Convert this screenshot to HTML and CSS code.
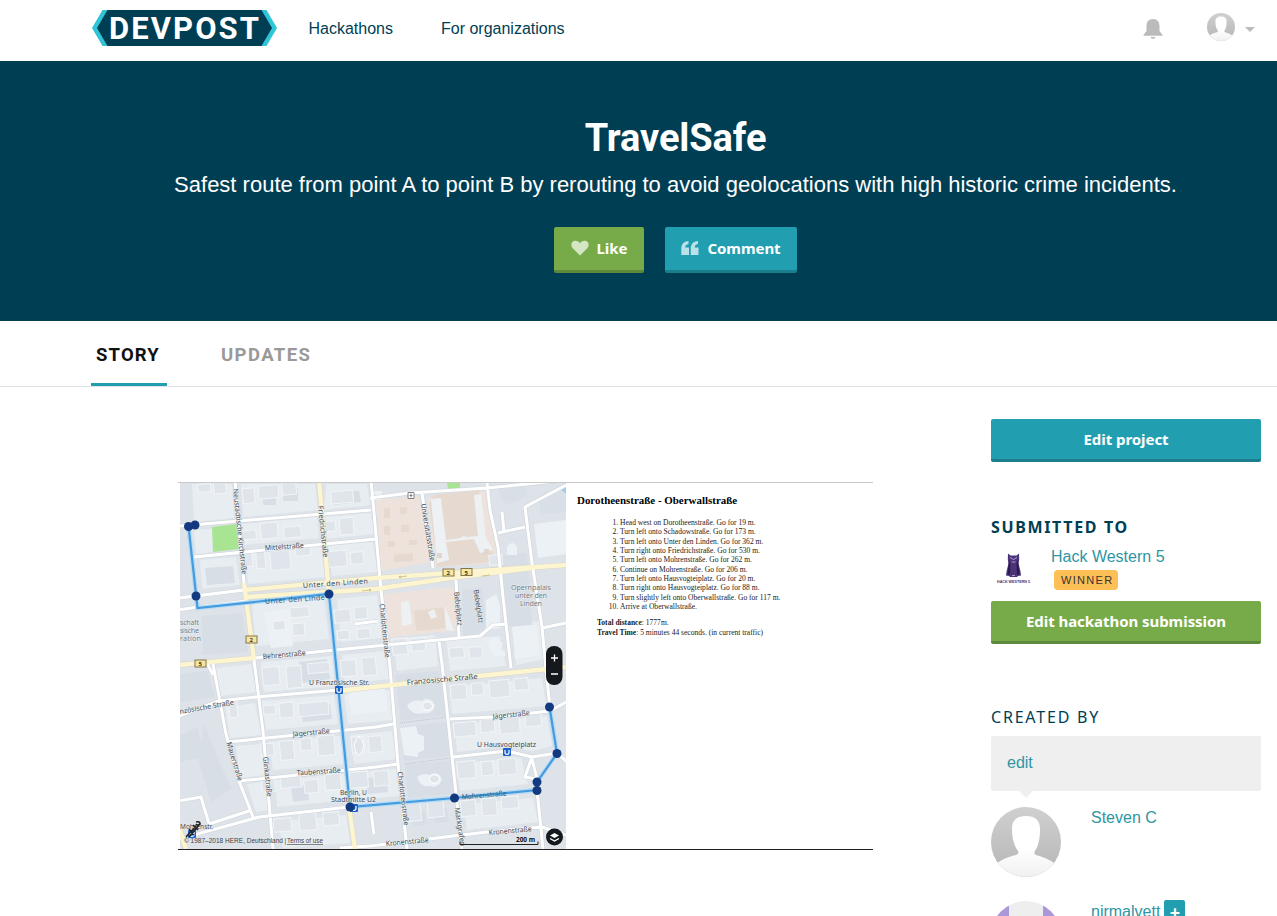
FILE: index.html
```html
<!DOCTYPE html>
<html lang="en">
<head>
<meta charset="utf-8">
<title>TravelSafe | Devpost</title>
<link rel="stylesheet" href="styles.css">
</head>
<body>
<svg class="defs" width="0" height="0">
  <defs>
    <linearGradient id="avatar-bg" x2="0" y2="1"><stop stop-color="#d0d0d0"/><stop offset="1" stop-color="#b5b5b5"/></linearGradient>
    <linearGradient id="avatar-fg" x2="0" y2="1"><stop offset=".5" stop-color="#fff"/><stop offset="1" stop-color="#ededed"/></linearGradient>
    <clipPath id="avatar-clip"><circle cx="35" cy="35" r="35"/></clipPath>
    <symbol id="avatar" viewBox="0 0 70 70">
      <g clip-path="url(#avatar-clip)">
        <path fill="url(#avatar-bg)" d="M0 0h70v70H0z"/>
        <path fill="url(#avatar-fg)" d="M35 9C26 9 21 13 21 22c0 9 2 17 6 22 1 2 0 3-2 4C16 50 10 53 5 57v18h60V57c-6-4-12-7-20-9-2-1-2-2-1-4 4-6 5-14 5-22 0-9-5-13-14-13z"/>
      </g>
    </symbol>
  </defs>
</svg>

<header class="topbar">
  <a class="logo">
    <svg width="186" height="36" viewBox="0 0 186 36">
      <path fill="#2fc5d6" d="M10.500 0h164l10.500 18-10.500 18h-164L0 18z"/>
      <path fill="#003e54" d="M15.500 0h154L180 18l-10.500 18h-154L5 18z"/>
      <text class="logo-text" x="17" y="29" textLength="150">DEVPOST</text>
    </svg>
  </a>
  <nav class="nav"><a>Hackathons</a><a>For organizations</a></nav>
  <div class="account">
    <svg class="bell" width="20" height="22" viewBox="0 0 20 22"><path fill="#bbb" d="M10 1C5.500 1 3.500 4 3.500 8v5L.5 17v.7h19V17l-3-4V8c0-4-2-7-6.500-7zM7.500 19h5c-.3 1.200-1 1.800-2.500 1.800S7.800 20.200 7.500 19z"/></svg>
    <svg class="me" width="28" height="28"><use href="#avatar"/></svg>
    <svg class="caret" width="10" height="6" viewBox="0 0 10 6"><path fill="#bbb" d="M0 0h10L5 5z"/></svg>
  </div>
</header>

<section class="hero">
  <h1>TravelSafe</h1>
  <p>Safest route from point A to point B by rerouting to avoid geolocations with high historic crime incidents.</p>
  <div class="hero-actions">
    <a class="btn green like">
      <svg width="18" height="16" viewBox="0 0 18 16"><path fill="#d5e6c5" d="M9 15.500 1.500 8C-.5 5.500.2 2 3 1c2.500-.8 4.800.3 6 2.300C10.200 1.300 12.500.2 15 1c2.800 1 3.500 4.500 1.500 7z"/></svg>
      <span>Like</span>
    </a>
    <a class="btn teal comment">
      <svg width="18" height="15" viewBox="0 0 18 15"><path id="q" fill="#b8e2e8" d="M7.500 0v3C5.500 3.300 4.300 4.500 4.200 6.500H8V14H.3V7.500C.3 3 3 .3 7.500 0z"/><use href="#q" x="9.500"/></svg>
      <span>Comment</span>
    </a>
  </div>
</section>

<nav class="tabs"><a class="tab active">STORY</a><a class="tab">UPDATES</a></nav>

<main class="content">
  <div class="gallery">
    <div class="slide">
      <svg class="map" width="388" height="366" viewBox="178 483 388 366">
        <defs>
          <clipPath id="frame"><path d="M180 483h386v366H180z"/></clipPath>
          <g id="dot"><circle r="4.500" fill="#133a80"/></g>
          <g id="ubahn"><rect x="-4" y="-4" width="8" height="8" rx="1" fill="#1b62cc"/><path d="M-2-2v2.500q0 1.800 2 1.800t2-1.800V-2" fill="none" stroke="#fff" stroke-width="1.200"/></g>
          <path id="white-roads" d="M179 526 371 510M370 498 410 493 487 488 566 480M194 557 376 539M179 598 244 590M179 610 198 607 246 601M235 480 244 583M254 660 263 731 273 849M254 658 376 646 480 636 493 625 507 624M371 480 381 590 390 667 398 764 407 849M422 493 433 568M487 483 490 510 498 547 503 597 511 668M566 485 525 507 532 563 542 627 547 680 550 707 557 753M498 533 525 527M542 628 566 623M456 580 459 637M439 642 442 664 462 849M339 690 256 697 219 701 179 716M213 664 226 734 239 781 253 817M228 742 376 727 393 724M239 781 376 767 398 764M450 719 493 717 550 711 566 702M453 757 507 751 532 757 557 753 567 762M532 757 525 777 537 779 532 759M179 839 259 817 349 807 454 798 537 790M209 824 249 811M209 824 201 797 179 801M340 848 370 846 487 832 542 827 566 835M537 790 543 849M188 526 198 608M371 812 374 834M355 624 378 621M206 661 213 675M502 512 504 531"/>
          <path id="yellow-roads" d="M244 590 376 578 566 565M246 597 376 589 450 578 532 568M244 583 254 660M179 665 254 658M319 480 329 593M339 691 373 687 547 669 566 667M349 807 355 849M180 830 186 849"/>
        </defs>
        <g clip-path="url(#frame)">
          <path fill="#dde3e9" d="M178 482h390v370H178z"/>
          <!-- city blocks -->
          <g fill="#e8edf1">
            <path d="M192 484h40l2 34-40 4zM241 484h74l3 26-75 7zM326 484h41l3 21-46 5zM194 530l18-1 2 23-18 2zM242 524l75-7 2 21-75 7zM325 517l46-4 3 21-48 5zM200 560l36-3 4 28-38 4zM246 553l75-7 4 31-77 7zM328 546l45-4 4 30-45 4zM252 604l72-6 5 41-73 7zM337 599l40-4 5 43-41 4zM216 668l35-4 5 28-35 4zM261 662l71-6 3 30-71 6zM342 655l43-4 4 28-44 5zM225 707l30-4 6 32-31 3zM262 701l72-6 4 29-72 6zM344 695l46-5 4 30-46 4zM236 746l26-2 4 31-26 3zM269 742l71-6 4 28-71 6zM350 735l42-4 4 28-42 5zM247 784l20-2 3 28-14 2zM275 780l69-6 3 26-70 7zM354 773l42-4 4 27-43 4zM278 821l68-6 4 28-67 5zM450 687l92-9 4 28-94 8zM454 724l93-8 5 30-20 5-25-5-50 6zM457 763l64-5 7 26-68 7zM463 804l70-6 5 24-71 8zM393 639l42-4 3 31-41 5zM446 640l54-4 6 30-56 5zM513 623l26-2 5 38-28 6z"/>
          </g>
          <g fill="#d8dee5">
            <path d="M205 568l28-2 2 17-28 2zM263 496h13v9h-13zM283 488h15v13h-15zM332 491h27l2 11-27 3zM202 616l40-3 6 39-45 3zM180 674l27-3 8 26-35 5zM301 707l29-3 2 15-29 3zM299 662l28-3 3 20-28 4zM180 735l18-8 5 30-23 5zM204 724l18 44 10 20-21 14-13-43zM291 787l16-2 2 15-16 2zM366 778l20-2 2 16-20 2zM395 675l44-4 8 44-46 6zM400 727l47-5 4 34-47 5zM405 765l48-5 3 34-48 4zM412 812l13-1 1 14-13 1zM433 809l14-1 1 14-13 1zM498 555l29-2 5 72-28 2zM462 590l20-2 5 46-24 1z"/>
          </g>
          <!-- university and opera quarters -->
          <path fill="#ede3dc" d="m376 500 43-4 13 66-51 9zM427 498l58-7 14 72-64 4zM384 594l69-7 4 43-71 8z"/>
          <path fill="#e6d9cf" d="m434 495 45-5 8 54 12 17-62 6-2-18-6-45zM414 611l31-4 2 21-31 3zM384 508h6v10h-6zM400 507h7v7h-7zM384 526h6v9h-6zM401 525h8v7h-8zM388 541h7v6h-7zM409 540h8v5h-8zM394 555l19-2v8l-19 1z"/>
          <path fill="#eef1f4" d="m431 499 10-1 5 42 14-2 3-2 4 1 11-1-4-41 7-1 5 43 7 13-13 3-6-14-28 3 3 18-12 3zM401 602l8-1 3 23-10 2zM428 612l6-3 3 8-6 2zM444 605l5 12 5 14-8-1z"/>
          <path fill="#e0d6ce" d="M437 553h5v5h-5zM484 549h5v5h-5z"/>
          <g fill="#ecf1f5">
            <path d="m534 524 32-4v34l-28 4zM264 612l26-3 3 37-22 2zM512 627l24-2 4 30-25 4zM347 692l38-4 3 23-36 4zM507 547q5-8 10 0v8h-10zM486 600l10-6 4 11v23l-14 2zM487 641l8-4 8 6-3 8h5v5h-12zM407 706q5-7 15-5 7-6 13 4-2 10-12 8-10 3-16-7zM400 728l16-2 2 8 6 2v14l-6 3v4l-14-2zM417 777q6-5 13-2 9-5 12 5-4 9-13 6-8 2-12-9zM373 491h9v9h-9z"/>
          </g>
          <path fill="#d9dfe6" d="m497 487 27-3 4 10-12 8-12 2zM548 498l14-7 4 6v15l-15 2zM539 496l8-5 3 22-9 1z"/>
          <path fill="#a9e493" d="M447 483h13v6h-12z"/>
          <path fill="#9dccec" d="m558 487 8-4v11z"/>
          <!-- building outlines and courtyards, aligned to the street grid -->
          <g class="buildings" transform="rotate(-5 373 666)">
            <path d="M214 470h13v8h-13zM230 469h12v12h-12zM258 478h12v15h-12zM274 477h20v13h-20zM298 470h14v18h-14zM346 489h22v12h-22zM251 520h17v9h-17zM273 514h17v16h-17zM296 520h17v11h-17zM250 542h12v14h-12zM266 542h9v17h-9zM280 543h20v19h-20zM306 541h15v9h-15zM336 518h12v10h-12zM352 516h14v17h-14zM338 548h18v16h-18zM360 551h13v12h-13z"/>
            <path d="M277 613h12v9h-12zM295 601h19v10h-19zM296 617h12v12h-12zM339 607h16v13h-16zM359 606h13v12h-13zM340 628h12v9h-12zM360 628h13v10h-13zM262 658h17v18h-17zM286 659h15v22h-15zM308 658h22v10h-22zM341 658h15v16h-15zM362 657h14v18h-14zM226 687h8v18h-8zM260 696h12v9h-12zM276 695h14v15h-14zM295 697h30v13h-30z"/>
            <path d="M345 735h12v16h-12zM362 736h13v16h-13zM254 734h13v12h-13zM273 733h14v19h-14zM294 732h11v12h-11zM311 731h17v20h-17zM252 770h13v12h-13zM271 769h20v11h-20zM294 774h14v13h-14zM315 770h16v16h-16zM340 770h18v16h-18zM364 771h15v15h-15zM260 810h18v13h-18zM286 807h17v17h-17zM310 808h16v13h-16zM394 641h15v16h-15zM413 642h14v13h-14zM450 655h15v10h-15zM470 656h13v11h-13z"/>
            <path d="M448 692h16v15h-16zM469 692h12v12h-12zM487 691h20v17h-20zM512 691h14v12h-14zM448 730h22v14h-22zM475 729h14v13h-14zM494 729h20v16h-20zM520 727h16v13h-16zM448 769h18v17h-18zM472 771h12v14h-12zM489 770h18v16h-18zM448 808h15v16h-15zM469 808h15v17h-15zM489 808h17v12h-17zM392 806h16v18h-16zM415 805h16v17h-16zM498 566h13v10h-13z"/>
          </g>
          <path fill="#a9e493" d="m212 527 25-3 2 25-26 3z"/>
          <path fill="#dfe5ea" stroke="#fff" d="M422 706l3-4h5l3 4-3 4h-5zM429 779l3-4h5l3 4-3 4h-5zM354 746q5-18 10 0-5 18-10 0z"/>
          <path d="M248 597 320 590M400 723 447 717M405 764 450 758" fill="none" stroke="#bfc4ca" stroke-dasharray="1 1"/>
          <use href="#white-roads" class="casing"/><use href="#yellow-roads" class="casing wide"/>
          <use href="#white-roads" class="road"/><use href="#yellow-roads" class="road main"/>
          <path d="m362 591 9-1-2-1m2 1-2 1M407 576l-8 1 2-1m-2 1 2 1M482 576l8-1" stroke="#b9ae77" fill="none" stroke-width=".7"/>
          <path class="route-glow" d="M195 524.500 188.500 526 197.500 608 329 594 350 807 454.500 798 537 790V782L557 753.500 549.500 707"/>
          <path class="route" d="M195 524.500 188.500 526 197.500 608 329 594 350 807 454.500 798 537 790V782L557 753.500 549.500 707"/>
          <!-- street names -->
          <g class="street">
            <text transform="translate(233 489) rotate(84)" textLength="86" lengthAdjust="spacingAndGlyphs">Neustädtische Kirchstraße</text>
            <text transform="translate(318 506) rotate(84)" textLength="52" lengthAdjust="spacingAndGlyphs">Friedrichstraße</text>
            <text transform="translate(265 550.500) rotate(-4)" textLength="39" lengthAdjust="spacingAndGlyphs">Mittelstraße</text>
            <text transform="translate(303 588) rotate(-4)" textLength="65">Unter den Linden</text>
            <text class="on-route" transform="translate(265 604) rotate(-4)" textLength="60">Unter den Linde</text>
            <text transform="translate(263 659) rotate(-5)" textLength="43" lengthAdjust="spacingAndGlyphs">Behrenstraße</text>
            <text transform="translate(421 504) rotate(81)" textLength="58" lengthAdjust="spacingAndGlyphs">Universitätsstraße</text>
            <text transform="translate(379.500 604) rotate(84)" textLength="54" lengthAdjust="spacingAndGlyphs">Charlottenstraße</text>
            <text transform="translate(454 592) rotate(84)" textLength="34" lengthAdjust="spacingAndGlyphs">Bebelplatz</text>
            <text transform="translate(473.500 590) rotate(81)" textLength="34" lengthAdjust="spacingAndGlyphs">Bebelplatz</text>
            <text transform="translate(180 714) rotate(-10)" textLength="55" lengthAdjust="spacingAndGlyphs">nzösische Straße</text>
            <text transform="translate(407 685) rotate(-5)" textLength="71" lengthAdjust="spacingAndGlyphs">Französische Straße</text>
            <text transform="translate(293 736.500) rotate(-5)" textLength="37" lengthAdjust="spacingAndGlyphs">Jägerstraße</text>
            <text transform="translate(297 775.500) rotate(-4)" textLength="44" lengthAdjust="spacingAndGlyphs">Taubenstraße</text>
            <text transform="translate(226.500 743) rotate(73)" textLength="40" lengthAdjust="spacingAndGlyphs">Mauerstraße</text>
            <text transform="translate(263 757) rotate(84)" textLength="40" lengthAdjust="spacingAndGlyphs">Glinkastraße</text>
            <text transform="translate(493 719) rotate(-6)" textLength="37" lengthAdjust="spacingAndGlyphs">Jägerstraße</text>
            <text class="on-route" transform="translate(462 799.500) rotate(-5)" textLength="45" lengthAdjust="spacingAndGlyphs">Mohrenstraße</text>
            <text transform="translate(397.500 772) rotate(83)" textLength="54" lengthAdjust="spacingAndGlyphs">Charlottenstraße</text>
            <text transform="translate(454.500 808) rotate(81)" textLength="39" lengthAdjust="spacingAndGlyphs">Markgrafen</text>
            <text transform="translate(386 846) rotate(-5)" textLength="43" lengthAdjust="spacingAndGlyphs">Kronenstraße</text>
            <text transform="translate(489 835) rotate(-5)" textLength="43" lengthAdjust="spacingAndGlyphs">Kronenstraße</text>
            <text x="309" y="685" textLength="60" lengthAdjust="spacingAndGlyphs">U Französische Str.</text>
            <text x="477" y="747" textLength="59" lengthAdjust="spacingAndGlyphs">U Hausvogteiplatz</text>
            <text x="340" y="795" textLength="27" lengthAdjust="spacingAndGlyphs">Berlin, U</text>
            <text x="331" y="802" textLength="45" lengthAdjust="spacingAndGlyphs">Stadtmitte U2</text>
            <text x="180" y="829" textLength="33" lengthAdjust="spacingAndGlyphs">Mohrenstr.</text>
          </g>
          <g class="street area">
            <text x="180" y="625" textLength="19">schaft</text><text x="180" y="633" textLength="19">sische</text><text x="180" y="641" textLength="21">ration</text>
            <text x="511" y="590" textLength="40">Opernpalais</text><text x="515" y="598" textLength="32">unter den</text><text x="520" y="606" textLength="22">Linden</text>
          </g>
          <g class="shields">
            <rect x="246" y="636" width="11" height="7"/><rect x="195" y="660" width="11" height="7"/><rect x="443" y="569" width="11" height="7"/><rect x="461" y="568.500" width="11" height="7"/>
            <text x="249.500" y="642">2</text><text x="198.500" y="666">5</text><text x="446.500" y="575">2</text><text x="464.500" y="574.500">5</text>
          </g>
          <path d="M408 492.500h6v6h-6zM409.500 495.500h3M411 493.500v4" fill="#fff" stroke="#666" stroke-width=".8"/>
          <use href="#ubahn" x="339" y="690"/><use href="#ubahn" x="507" y="752"/><use href="#ubahn" x="354" y="808"/><use href="#ubahn" x="192" y="834"/>
          <path d="m186 837 10-11m-7 11 10-12m-10 4 5 6m-1-10 5 5m-2-8q4-1 4 2-3 2-4 0" fill="none" stroke="#222" stroke-width="1.700"/>
          <use href="#dot" x="188.500" y="526.500"/><use href="#dot" x="195" y="525"/><use href="#dot" x="196" y="596"/><use href="#dot" x="329" y="594"/><use href="#dot" x="350" y="807"/><use href="#dot" x="454.500" y="798"/><use href="#dot" x="537" y="790.500"/><use href="#dot" x="537" y="782"/><use href="#dot" x="557" y="753.500"/><use href="#dot" x="549.500" y="707"/>
          <!-- map controls -->
          <rect x="546" y="646" width="16.500" height="39" rx="8" fill="#15191e"/>
          <path d="M551 658h7M554.500 654.500v7M551 674h7" stroke="#fff" stroke-width="1.300"/>
          <circle cx="554.500" cy="837" r="8.500" fill="#15191e"/>
          <path d="m550 835.500 4.500-2.500 4.500 2.500-4.500 2.500z" fill="#fff"/><path d="m550 838.500 4.500 2.500 4.500-2.500" fill="none" stroke="#fff" stroke-width="1.200"/>
          <path d="M460 841.500v3h78v-3" fill="none" stroke="#222"/>
          <text class="scale" x="516" y="842" textLength="19">200 m</text>
          <text class="copyright" x="184" y="843" textLength="99" lengthAdjust="spacingAndGlyphs">© 1987–2018 HERE, Deutschland</text>
          <text class="copyright" x="284.500" y="843">|</text>
          <text class="copyright link" x="287" y="843" textLength="36" lengthAdjust="spacingAndGlyphs">Terms of use</text>
        </g>
      </svg>
      <div class="directions">
        <h2>Dorotheenstraße - Oberwallstraße</h2>
        <ol>
          <li>Head west on Dorotheenstraße. Go for 19 m.</li>
          <li>Turn left onto Schadowstraße. Go for 173 m.</li>
          <li>Turn left onto Unter den Linden. Go for 362 m.</li>
          <li>Turn right onto Friedrichstraße. Go for 530 m.</li>
          <li>Turn left onto Mohrenstraße. Go for 262 m.</li>
          <li>Continue on Mohrenstraße. Go for 206 m.</li>
          <li>Turn left onto Hausvogteiplatz. Go for 20 m.</li>
          <li>Turn right onto Hausvogteiplatz. Go for 88 m.</li>
          <li>Turn slightly left onto Oberwallstraße. Go for 117 m.</li>
          <li>Arrive at Oberwallstraße.</li>
        </ol>
        <p><b>Total distance</b>: 1777m.<br><b>Travel Time</b>: 5 minutes 44 seconds. (in current traffic)</p>
      </div>
    </div>
  </div>

  <aside class="sidebar">
    <a class="btn teal block"><span>Edit project</span></a>
    <h3 class="submitted">SUBMITTED TO</h3>
    <div class="hackathon">
      <svg width="46" height="46" viewBox="991 545 46 46">
        <path fill="#4b347a" d="m1008 553.500 2.500 2h6l2.500-2 .2 6-.7 4 2 8 .5 4-3 .500-1 1h-7l-1-1-3-.5.5-4 2-8-.7-4z"/>
        <path fill="#2b1b4d" d="m1009 560 1.500 4-.5 10-2.500 1 .5-5zM1018 560l-1.500 4 .5 10 2.500 1-.5-5z"/>
        <path stroke="#b9a7d6" stroke-width=".9" fill="none" d="m1010 557.500 3.500 2 3.500-2M1011.500 562h4M1012 575.500h3"/>
        <text class="hack-caption" x="997" y="583" textLength="33" lengthAdjust="spacingAndGlyphs">HACK WESTERN 5</text>
      </svg>
      <div class="hack-info"><a>Hack Western 5</a><span class="winner">WINNER</span></div>
    </div>
    <a class="btn green block submission"><span>Edit hackathon submission</span></a>
    <h3 class="created">CREATED BY</h3>
    <div class="callout"><a>edit</a></div>
    <div class="member"><svg width="70" height="70"><use href="#avatar"/></svg><a>Steven C</a></div>
    <div class="member second">
      <svg width="70" height="70" viewBox="0 0 70 70"><g clip-path="url(#avatar-clip)"><path fill="#eee" d="M0 0h70v70H0z"/><path fill="#ab98da" d="M0 0h18v18H0zM52 0h18v18H52z"/></g></svg>
      <a>nirmalvett</a><span class="plus">+</span>
    </div>
  </aside>
</main>
</body>
</html>
```
FILE: styles.css
```css
* { box-sizing: border-box; }
html, body { height: 916px; overflow: hidden; }
body { margin: 0; background: #fff; color: #003e54; font: 16px/24px "Liberation Sans", Arial, sans-serif; }
h1, h2, h3, p, ol { margin: 0; padding: 0; }
.defs { position: absolute; }

.topbar { display: flex; align-items: flex-start; height: 61px; padding: 10px 22px 0 92px; }
.logo { display: block; height: 36px; }
.logo-text { fill: #fff; font: 700 31px Roboto, sans-serif; }
.nav { display: flex; gap: 48px; margin: 7px 0 0 30.500px; }
.account { display: flex; margin-left: auto; }
.bell { margin-top: 8px; }
.me { margin: 3px 10px 0 44px; }
.caret { margin-top: 17px; }

.hero { height: 260px; padding: 53px 0 0 74px; background: #003e54; color: #fff; text-align: center; }
.hero h1 { font: 700 38px/48px Roboto, sans-serif; letter-spacing: -.1px; }
.hero p { margin-top: 8px; font-size: 22px; line-height: 30px; white-space: nowrap; }
.hero-actions { display: flex; justify-content: center; gap: 21px; margin-top: 27px; }
.btn { display: flex; align-items: center; justify-content: center; border-radius: 2px; color: #fff; font: 700 15px/24px "Noto Sans", sans-serif; letter-spacing: -.05px; white-space: nowrap; }
.green { background: #77ab49; border-bottom: 3px solid #5f893a; }
.teal { background: #219eb0; border-bottom: 3px solid #1a7e8d; }
.like, .comment { height: 46px; gap: 8px; padding-bottom: 1px; }
.like { width: 90px; }
.comment { width: 132px; }
.block { height: 43px; }

.tabs { display: flex; gap: 48px; height: 66px; padding-left: 91px; border-bottom: 1px solid #dfe3e6; }
.tab { height: 65px; padding: 21px 6px 0; color: #999; font: 700 18.500px/26px Roboto, sans-serif; letter-spacing: 1.400px; border-bottom: 3px solid transparent; }
.tab.active { width: 76px; padding: 21px 0 0 5px; color: #111; letter-spacing: 1.150px; border-color: #219eb0; }

.content { display: flex; align-items: flex-start; }
.gallery { width: 991px; padding: 95px 0 0 178px; }
.slide { display: flex; width: 695px; height: 368px; border-top: 1px solid #c9c9c9; border-bottom: 1px solid #222; }
.map { flex: none; display: block; font-family: "Noto Sans", sans-serif; }
.buildings { fill: #dfe5ea; stroke: #f2f5f7; stroke-width: 1; }
.casing { fill: none; stroke: #d0d5da; stroke-width: 4.200; stroke-linejoin: round; }
.casing.wide { stroke-width: 5.600; stroke: #d8d8cd; }
.road { fill: none; stroke: #fff; stroke-width: 3; stroke-linejoin: round; }
.road.main { stroke: #fcf5cf; stroke-width: 4.400; }
.route-glow { fill: none; stroke: #b5dcf7; stroke-width: 4.500; }
.route { fill: none; stroke: #459bdd; stroke-width: 2.200; }
.street { fill: #43494f; font-size: 7.200px; stroke: #eef1f4; stroke-width: .8; paint-order: stroke; }
.street .on-route { fill: #315f86; stroke: none; }
.area { fill: #737b84; }
.shields rect { fill: #f5e6a0; stroke: #86754a; stroke-width: 1; }
.shields text { font-size: 6px; font-weight: 700; fill: #443b22; }
.scale { font-size: 6.500px; font-weight: 700; fill: #111; }
.copyright { font: 6.500px "Liberation Sans", sans-serif; fill: #444; }
.copyright.link { text-decoration: underline; }

.directions { padding: 11px 0 0 11px; color: #222; font: 7.550px/9.330px "Liberation Serif", serif; white-space: nowrap; }
.directions h2 { color: #000; font-size: 10.950px; line-height: 12px; }
.directions ol { margin: 12px 0 7px 43px; }
.directions p { margin-left: 20px; }

.sidebar { width: 270px; padding-top: 32px; }
.sidebar a:not(.btn) { color: #2e95a3; }
.sidebar h3 { line-height: 24px; }
.submitted { margin-top: 53px; font: 700 16px/24px "Noto Sans", sans-serif; letter-spacing: 1.650px; }
.hackathon { display: flex; gap: 14px; height: 46px; margin-top: 6px; }
.hack-info { display: flex; flex-direction: column; align-items: flex-start; }
.winner { height: 20px; margin-left: 3px; margin-top: 1px; padding: 0 5px 0 7px; border-radius: 4px; background: #ffbf57; color: #333; font-size: 11px; line-height: 20px; letter-spacing: 1.300px; }
.hack-caption { font: 700 4.200px "Liberation Sans", sans-serif; fill: #4b347a; }
.submission { margin-top: 10px; }
.created { margin-top: 61px; font: 400 16px/24px "Noto Sans", sans-serif; letter-spacing: 1.800px; }
.callout { position: relative; height: 55px; margin-top: 7px; padding: 15px 16px; border-radius: 2px; background: #efefef; }
.callout::after { content: ""; position: absolute; left: 28px; top: 55px; border: 7px solid transparent; border-top-color: #efefef; border-bottom: 0; }
.member { display: flex; height: 70px; margin-top: 16px; }
.member svg { flex: none; margin-right: 30px; }
.member > a { margin-top: -1px; }
.second { margin-top: 24px; }
.plus { width: 21px; height: 21px; margin: -1px 0 0 4px; border-radius: 2px; background: #219eb0; color: #fff; font: 700 18px/24px "Noto Sans", sans-serif; text-align: center; }
```
